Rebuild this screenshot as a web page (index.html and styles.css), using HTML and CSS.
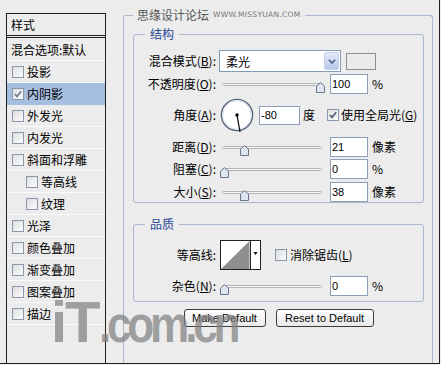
FILE: index.html
```html
<!DOCTYPE html>
<html lang="zh-CN">
<head>
  <meta charset="UTF-8">
  <title>图层样式 - 内阴影</title>
  <link rel="stylesheet" href="styles.css">
</head>
<body>
  <div class="dialog">
    <div class="style-list">
      <div class="list-head">样式</div>
      <div class="list-item plain">混合选项:默认</div>
      <div class="list-item"><span class="check"></span>投影</div>
      <div class="list-item selected"><span class="check"><svg viewBox="0 0 10 10"><path d="M2 5 L4 7.5 L8.2 2.3"/></svg></span>内阴影</div>
      <div class="list-item"><span class="check"></span>外发光</div>
      <div class="list-item"><span class="check"></span>内发光</div>
      <div class="list-item"><span class="check"></span>斜面和浮雕</div>
      <div class="list-item sub"><span class="check"></span>等高线</div>
      <div class="list-item sub"><span class="check"></span>纹理</div>
      <div class="list-item"><span class="check"></span>光泽</div>
      <div class="list-item"><span class="check"></span>颜色叠加</div>
      <div class="list-item"><span class="check"></span>渐变叠加</div>
      <div class="list-item"><span class="check"></span>图案叠加</div>
      <div class="list-item"><span class="check"></span>描边</div>
    </div>

    <fieldset class="group outer">
      <legend>思缘设计论坛<span class="site">WWW.MISSYUAN.COM</span></legend>

      <fieldset class="group inner">
        <legend>结构</legend>
        <div class="row row-blend">
          <label class="label">混合模式(<u>B</u>):</label>
          <div class="select">
            <span>柔光</span>
            <span class="select-btn"><svg viewBox="0 0 8 5"><path d="M0.8 0.8 L4 4 L7.2 0.8"/></svg></span>
          </div>
          <span class="swatch"></span>
        </div>
        <div class="row row-opacity">
          <label class="label">不透明度(<u>O</u>):</label>
          <div class="slider"><span class="track"></span><span class="thumb" style="left: 96px"><svg viewBox="0 0 9 11"><path d="M0.5 10.5 V4.2 L4.5 0.6 L8.5 4.2 V10.5 Z"/></svg></span></div>
          <input class="field" type="text" value="100">
          <span class="unit">%</span>
        </div>
        <div class="row row-angle">
          <label class="label">角度(<u>A</u>):</label>
          <svg class="dial" viewBox="0 0 34 34">
            <circle cx="17" cy="17" r="15.6" class="dial-ring"/>
            <circle cx="17" cy="17" r="14.2" class="dial-inner"/>
            <line x1="17" y1="17" x2="20" y2="34"/>
            <circle cx="17" cy="17" r="1.7" class="dial-dot"/>
          </svg>
          <input class="field field-angle" type="text" value="-80">
          <span class="unit-deg">度</span>
          <span class="check check-global"><svg viewBox="0 0 10 10"><path d="M2 5 L4 7.5 L8.2 2.3"/></svg></span>
          <span class="check-text">使用全局光(<u>G</u>)</span>
        </div>
        <div class="row row-distance">
          <label class="label">距离(<u>D</u>):</label>
          <div class="slider"><span class="track"></span><span class="thumb" style="left: 20px"><svg viewBox="0 0 9 11"><path d="M0.5 10.5 V4.2 L4.5 0.6 L8.5 4.2 V10.5 Z"/></svg></span></div>
          <input class="field" type="text" value="21">
          <span class="unit">像素</span>
        </div>
        <div class="row row-choke">
          <label class="label">阻塞(<u>C</u>):</label>
          <div class="slider"><span class="track"></span><span class="thumb" style="left: 0px"><svg viewBox="0 0 9 11"><path d="M0.5 10.5 V4.2 L4.5 0.6 L8.5 4.2 V10.5 Z"/></svg></span></div>
          <input class="field" type="text" value="0">
          <span class="unit">%</span>
        </div>
        <div class="row row-size">
          <label class="label">大小(<u>S</u>):</label>
          <div class="slider"><span class="track"></span><span class="thumb" style="left: 20px"><svg viewBox="0 0 9 11"><path d="M0.5 10.5 V4.2 L4.5 0.6 L8.5 4.2 V10.5 Z"/></svg></span></div>
          <input class="field" type="text" value="38">
          <span class="unit">像素</span>
        </div>
      </fieldset>

      <fieldset class="group inner quality">
        <legend>品质</legend>
        <div class="row row-contour">
          <label class="label">等高线:</label>
          <svg class="contour" viewBox="0 0 41 30">
            <rect x="0.5" y="0.5" width="40" height="29" class="contour-box"/>
            <polygon points="1,29 29.5,1 29.5,29" class="contour-curve"/>
            <line x1="30.5" y1="0" x2="30.5" y2="30"/>
            <polygon points="33.5,12 37.5,12 35.5,15" class="contour-arrow"/>
          </svg>
          <span class="check check-aa"></span>
          <span class="check-text">消除锯齿(<u>L</u>)</span>
        </div>
        <div class="row row-noise">
          <label class="label">杂色(<u>N</u>):</label>
          <div class="slider"><span class="track"></span><span class="thumb" style="left: 0px"><svg viewBox="0 0 9 11"><path d="M0.5 10.5 V4.2 L4.5 0.6 L8.5 4.2 V10.5 Z"/></svg></span></div>
          <input class="field" type="text" value="0">
          <span class="unit">%</span>
        </div>
      </fieldset>

      <div class="buttons">
        <button class="button btn-make">Make Default</button>
        <button class="button btn-reset">Reset to Default</button>
      </div>
    </fieldset>

    <div class="watermark">iT<span class="dom">.com.cn</span></div>
  </div>
</body>
</html>
```

FILE: styles.css
```css
body {
  margin: 0;
  background: #ececec;
  font-family: "Noto Sans CJK SC", sans-serif;
  font-size: 12px;
  color: #000;
}
.dialog {
  width: 439px;
  height: 363px;
  background: #ececec;
  border-right: 1px solid #1e1e1e;
  border-bottom: 1px solid #1e1e1e;
  display: flex;
  position: relative;
  overflow: hidden;
}

/* left list of styles */
.style-list {
  width: 98px;
  margin: 13px 0 0 6px;
  border: 1px solid #1e1e1e;
  border-bottom: none;
}
.list-head {
  height: 21px;
  line-height: 21px;
  padding-left: 4px;
  border-bottom: 3px double #1e1e1e;
  margin-bottom: 1px;
}
.list-item {
  height: 22px;
  box-sizing: border-box;
  border-bottom: 1px solid #fafafa;
  display: flex;
  align-items: center;
  padding-left: 5px;
  line-height: 14px;
}
.list-item.plain {
  padding-left: 4px;
}
.list-item.sub {
  padding-left: 19px;
}
.list-item.selected {
  background: #a6bee0;
  border-bottom-color: #a6bee0;
}
.check {
  width: 12px;
  height: 12px;
  box-sizing: border-box;
  border: 1px solid #8a97ab;
  background: linear-gradient(135deg, #dedede, #fcfcfc);
  margin-right: 3px;
  flex: none;
  display: flex;
}
.check svg {
  width: 10px;
  height: 10px;
  fill: none;
  stroke: #4a5b74;
  stroke-width: 1.7;
}
.list-item.selected .check svg {
  stroke: #6f7f96;
}

/* group boxes */
fieldset.group {
  margin: 0;
  padding: 0;
  min-width: 0;
  border: 1px solid #a9b8cf;
  border-radius: 3px;
}
fieldset.group > legend {
  padding: 0 4px;
  line-height: 14px;
  height: 14px;
}
fieldset.outer {
  flex: 1;
  margin: 8px 6px 0 17px;
  padding: 5px 8px 0 9px;
  border-bottom: none;
  border-radius: 3px 3px 0 0;
}
fieldset.outer > legend {
  color: #555;
  display: flex;
  align-items: center;
}
.site {
  font-family: "DejaVu Sans", sans-serif;
  font-size: 7.5px;
  margin-left: 4px;
  color: #777;
  letter-spacing: 0.3px;
}
fieldset.inner > legend {
  margin-left: 11px;
  padding: 0 5px;
  color: #2a4796;
}
fieldset.quality {
  margin-top: 14px;
  padding-bottom: 5px;
}

/* rows */
.row {
  display: flex;
  align-items: center;
  height: 20px;
  margin-top: 2px;
}
.row-blend {
  height: 22px;
  margin-top: 9px;
}
.row-angle {
  height: 36px;
  margin-top: 3px;
}
.row-distance {
  margin-top: 4px;
}
.row-size {
  margin-top: 3px;
}
.row-contour {
  height: 30px;
  margin-top: 9px;
}
.row-noise {
  margin-top: 6px;
}
.label {
  width: 82px;
  margin-right: 4px;
  text-align: right;
  flex: none;
  line-height: 14px;
  white-space: nowrap;
}

.select {
  margin-left: -1px;
  width: 122px;
  height: 22px;
  box-sizing: border-box;
  border: 1px solid #7f9db9;
  background: #fff;
  display: flex;
  align-items: center;
  justify-content: space-between;
  padding-left: 6px;
}
.select-btn {
  width: 15px;
  height: 18px;
  margin-right: 1px;
  box-sizing: border-box;
  border: 1px solid #c3d0ec;
  border-radius: 2px;
  background: linear-gradient(#e4ebfa, #b8c8ea);
  display: flex;
  align-items: center;
  justify-content: center;
}
.select-btn svg {
  width: 8px;
  height: 5px;
  fill: none;
  stroke: #4c5f86;
  stroke-width: 1.6;
}
.swatch {
  width: 30px;
  height: 17px;
  box-sizing: border-box;
  margin-left: 5px;
  border: 1px solid #8e8e8e;
  background: #ebebeb;
}

.slider {
  position: relative;
  width: 104px;
  height: 12px;
  flex: none;
}
.track {
  position: absolute;
  left: 2px;
  right: 2px;
  top: 5px;
  height: 3px;
  box-sizing: border-box;
  border: 1px solid #b4b4b4;
  border-radius: 2px;
  background: #f6f6f6;
}
.thumb {
  position: absolute;
  top: 1px;
  width: 9px;
  height: 11px;
}
.thumb svg {
  width: 9px;
  height: 11px;
  fill: #dfe5ee;
  stroke: #66768e;
  stroke-width: 1;
}

.field {
  width: 38px;
  height: 20px;
  box-sizing: border-box;
  margin: 0 0 0 6px;
  border: 1px solid #8d9fb8;
  padding: 0 1px;
  background: #fff;
  font-family: "Liberation Sans", sans-serif;
  font-size: 11px;
  color: #000;
  outline: none;
}
.field-angle {
  width: 41px;
  height: 19px;
  margin-left: 5px;
}
.unit {
  margin-left: 4px;
  line-height: 14px;
}
.unit-deg {
  margin-left: 3px;
  line-height: 14px;
}
.check-global {
  margin-left: 12px;
  margin-right: 2px;
}
.check-aa {
  margin-left: 14px;
  margin-right: 3px;
}
.check-text {
  line-height: 14px;
  white-space: nowrap;
}

.dial {
  width: 34px;
  height: 34px;
  flex: none;
  overflow: visible;
}
.dial-ring {
  fill: #fff;
  stroke: #56647c;
  stroke-width: 1.4;
}
.dial-inner {
  fill: none;
  stroke: #dde2ea;
  stroke-width: 1;
}
.dial line {
  stroke: #000;
  stroke-width: 1.2;
}
.dial-dot {
  fill: #000;
}

.contour {
  width: 41px;
  height: 30px;
  flex: none;
}
.contour-box {
  fill: #fff;
  stroke: #222;
  stroke-width: 1;
}
.contour-curve {
  fill: #8f8f8f;
}
.contour line {
  stroke: #222;
  stroke-width: 1;
}
.contour-arrow {
  fill: #000;
}

.buttons {
  display: flex;
  justify-content: center;
  gap: 10px;
  margin-top: 7px;
}
.button {
  height: 18px;
  padding: 0;
  border: 1px solid #3c3c3c;
  border-radius: 3px;
  background: linear-gradient(#ffffff, #e9e9e9);
  font-family: "Liberation Sans", sans-serif;
  font-size: 11px;
  color: #000;
}
.btn-make {
  width: 82px;
}
.btn-reset {
  width: 98px;
}

/* site watermark over the dialog */
.watermark {
  position: absolute;
  left: 51px;
  top: 293px;
  font-family: "Liberation Sans", sans-serif;
  font-weight: bold;
  font-size: 58px;
  line-height: 58px;
  letter-spacing: -2px;
  color: rgba(128, 128, 128, 0.72);
  white-space: nowrap;
  pointer-events: none;
}
.watermark .dom {
  display: inline-block;
  font-size: 52px;
  letter-spacing: -5px;
  transform: scaleX(0.85);
  transform-origin: left bottom;
}
```
